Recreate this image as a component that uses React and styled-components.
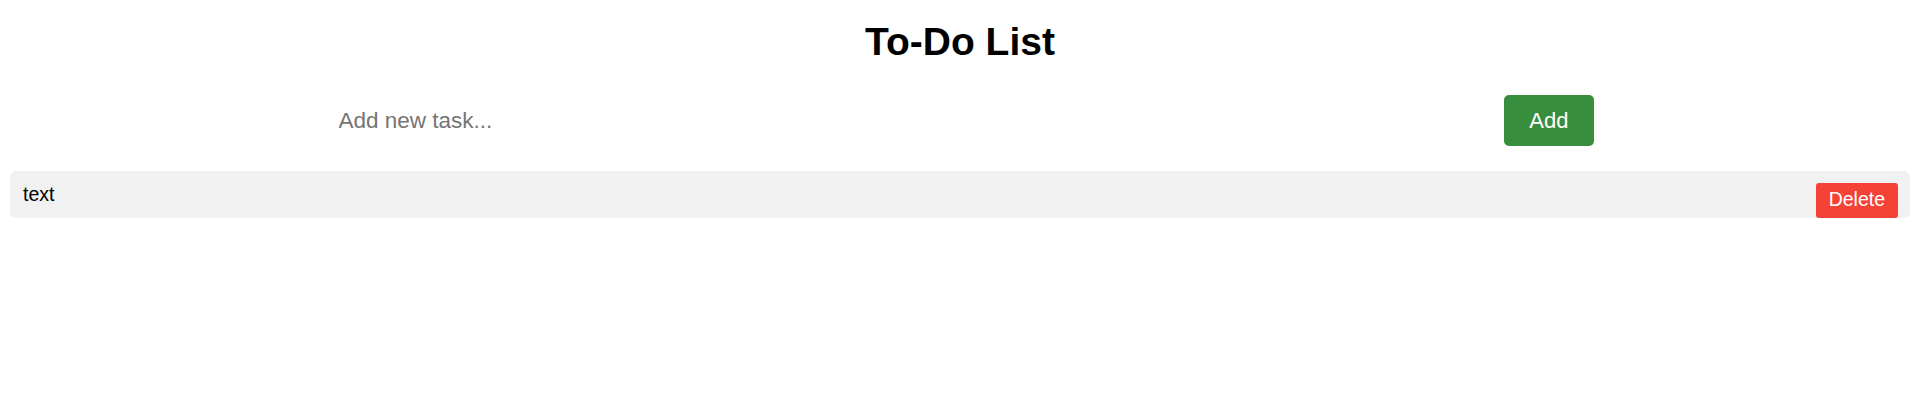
import React, { useState } from 'react';
import styled, { createGlobalStyle } from 'styled-components';

const GlobalStyle = createGlobalStyle`
    body {
        margin: 8px;
        background: #fff;
        font-family: "Liberation Sans", Arial, sans-serif;
        color: #000;
    }
`

function App() {
    const [tasks, setTasks] = useState([{ id: 1, text: 'text' }]);
    const [value, setValue] = useState('');

    const addTask = () => {
        if (!value.trim()) return;
        setTasks([...tasks, { id: Date.now(), text: value }]);
        setValue('');
    };

    const deleteTask = (id) => setTasks(tasks.filter((t) => t.id !== id));

    return (
        <Container>
            <GlobalStyle />
            <Title>To-Do List</Title>
            <Form onSubmit={(e) => { e.preventDefault(); addTask(); }}>
                <Input
                    placeholder="Add new task..."
                    value={value}
                    onChange={(e) => setValue(e.target.value)}
                />
                <AddButton type="submit">Add</AddButton>
            </Form>
            <List>
                {tasks.map((task) => (
                    <Item key={task.id}>
                        <TaskText>{task.text}</TaskText>
                        <DeleteButton onClick={() => deleteTask(task.id)}>Delete</DeleteButton>
                    </Item>
                ))}
            </List>
        </Container>
    )
}

export default App;

const Container = styled.div`
    width: 100%;
`

const Title = styled.h1`
    margin: 12px 0 0;
    font-size: 39px;
    line-height: 44px;
    font-weight: bold;
    text-align: center;
`

const Form = styled.form`
    display: flex;
    align-items: center;
    max-width: 1267px;
    margin: 31px auto 0;
`

const Input = styled.input`
    flex: 1;
    border: none;
    outline: none;
    padding: 12px 12px;
    font-family: inherit;
    font-size: 22.5px;
    background: transparent;
    &::placeholder {
        color: #757575;
    }
`

const AddButton = styled.button`
    border: none;
    border-radius: 5px;
    background-color: #388e3c;
    color: #fff;
    font-family: inherit;
    font-size: 22px;
    line-height: 25px;
    padding: 13px 25px;
    cursor: pointer;
`

const List = styled.ul`
    list-style: none;
    margin: 25px 0 0;
    padding: 0;
`

const Item = styled.li`
    display: flex;
    justify-content: space-between;
    align-items: flex-start;
    margin: 0 2px;
    padding: 12px 12px 0 13px;
    background-color: #f1f1f1;
    border-radius: 6px;
`

const TaskText = styled.span`
    font-size: 19.5px;
    line-height: 22px;
`

const DeleteButton = styled.button`
    border: none;
    border-radius: 3px;
    background-color: #f44336;
    color: #fff;
    font-family: inherit;
    font-size: 19.5px;
    line-height: 23px;
    padding: 5px 13px 7px;
    cursor: pointer;
`
